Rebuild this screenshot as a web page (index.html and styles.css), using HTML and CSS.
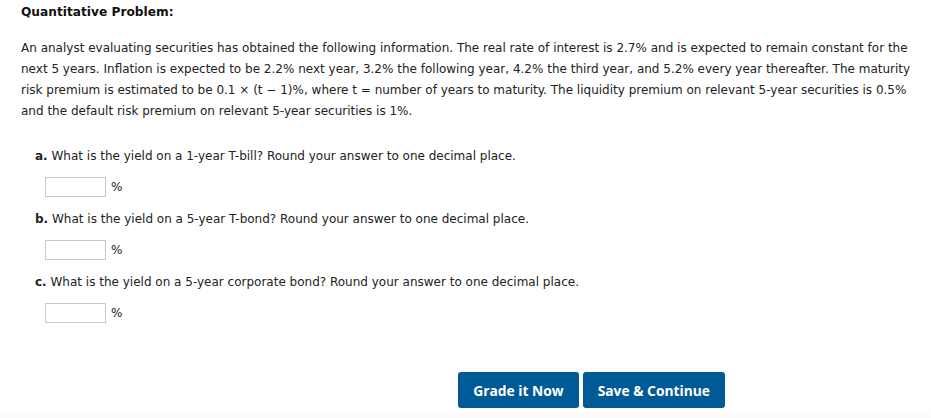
FILE: index.html
```html
<!DOCTYPE html>
<html lang="en">
<head>
<meta charset="UTF-8" />
<title>Quantitative Problem</title>
<link rel="stylesheet" href="styles.css">
</head>
<body>
  <div class="problem">
    <h1>Quantitative Problem:</h1>
    <p class="intro">An analyst evaluating securities has obtained the following information. The real rate of interest is 2.7% and is expected to remain constant for the next 5 years. Inflation is expected to be 2.2% next year, 3.2% the following year, 4.2% the third year, and 5.2% every year thereafter. The maturity risk premium is estimated to be 0.1 &times; (t &minus; 1)%, where t = number of years to maturity. The liquidity premium on relevant 5-year securities is 0.5% and the default risk premium on relevant 5-year securities is 1%.</p>

    <div class="question">
      <p><b>a.</b> What is the yield on a 1-year T-bill? Round your answer to one decimal place.</p>
      <div class="answer"><input type="text"> <span>%</span></div>
    </div>

    <div class="question">
      <p><b>b.</b> What is the yield on a 5-year T-bond? Round your answer to one decimal place.</p>
      <div class="answer"><input type="text"> <span>%</span></div>
    </div>

    <div class="question">
      <p><b>c.</b> What is the yield on a 5-year corporate bond? Round your answer to one decimal place.</p>
      <div class="answer"><input type="text"> <span>%</span></div>
    </div>
  </div>

  <div class="actions">
    <button class="btn">Grade it Now</button>
    <button class="btn">Save &amp; Continue</button>
  </div>
  <div class="footer"></div>
</body>
</html>
```

FILE: styles.css
```css
body, html {
  margin: 0; padding: 0;
  background: #fff;
  font-family: Verdana, "DejaVu Sans", sans-serif;
  font-size: 12px;
  color: #222;
}

.problem {
  padding: 2px 8px 0 21px;
}

h1 {
  font-size: 12.2px;
  font-weight: bold;
  line-height: 21px;
  margin: 0;
  color: #111;
}

.intro {
  line-height: 21px;
  margin: 15px 0 0 0;
}

.question {
  padding-left: 14px;
}
.question:first-of-type {
  margin-top: 24px;
}

.question p {
  margin: 0;
  line-height: 21px;
}

.answer {
  display: flex;
  align-items: center;
  gap: 5px;
  padding-left: 10px;
  margin: 10px 0 12px 0;
  height: 20px;
}

.answer input {
  width: 61px;
  height: 20px;
  box-sizing: border-box;
  border: 1px solid #c8c8c8;
  border-radius: 0;
  margin: 0;
  padding: 2px 4px;
}

.answer span {
  font-size: 12px;
}

.actions {
  display: flex;
  justify-content: flex-end;
  gap: 4px;
  margin-top: 49px;
  padding-right: 206px;
}

.btn {
  height: 36px;
  padding: 0 15px;
  background-color: #005a96;
  color: white;
  border: none;
  border-radius: 3px;
  font-family: "Open Sans", sans-serif;
  font-size: 13.8px;
  font-weight: bold;
  cursor: pointer;
}

.footer {
  height: 20px;
  background: linear-gradient(to bottom, #fff, #f6f6f6);
}
```
